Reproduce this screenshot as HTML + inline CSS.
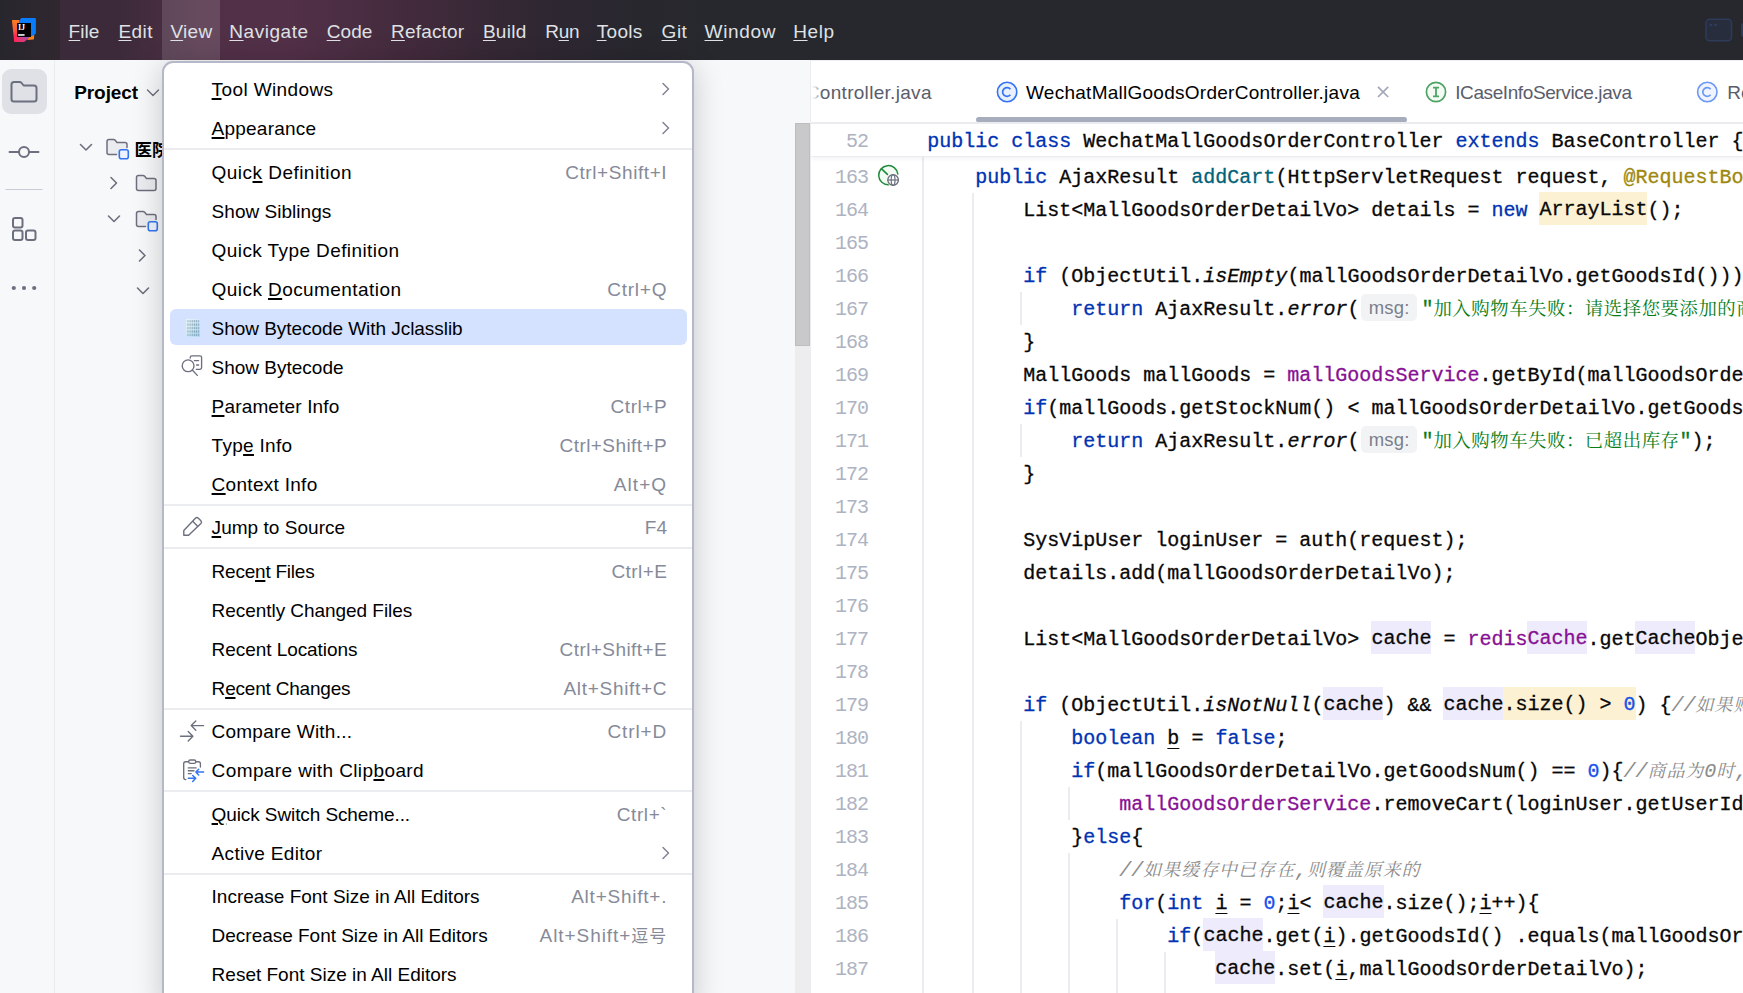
<!DOCTYPE html><html><head><meta charset="utf-8"><title>IDE</title><style>
*{box-sizing:border-box}
html,body{margin:0;padding:0}
body{width:1743px;height:993px;overflow:hidden;position:relative;background:#f7f8fa;font-family:"Liberation Sans","Noto Sans CJK SC",sans-serif;font-size:19px;color:#000}
u{text-decoration:underline;text-decoration-thickness:1.6px;text-underline-offset:1.5px}
#tb{position:absolute;left:0;top:0;width:1743px;height:60px;background:linear-gradient(90deg,#3a2a39 0px,#3c2a3a 120px,#513047 200px,#523048 290px,#412a3b 420px,#2f2732 540px,#28272e 640px,#27282e 720px,#27282e 100%)}
#tbdark{position:absolute;left:0;top:0;width:60px;height:60px;background:linear-gradient(90deg,#28262d,#30272f)}
#viewhl{position:absolute;left:162px;top:0;width:58px;height:60px;background:rgba(255,255,255,.13)}
.mb{position:absolute;top:1px;height:60px;line-height:62px;color:#dfe1e5;white-space:pre;font-size:19px}
.mb u{text-underline-offset:1.5px;text-decoration-thickness:1px}
#stripe{position:absolute;left:0;top:60px;width:55px;height:933px;background:#f7f8fa;border-right:1px solid #ebecf0}
#proj{position:absolute;left:55px;top:60px;width:756px;height:933px;background:#f7f8fa}
#ed{position:absolute;left:810px;top:60px;width:933px;height:933px;background:#fff;border-left:1px solid #ebecf0;overflow:hidden}
#menu{position:absolute;left:162px;top:61px;width:532px;height:950px;background:#fff;border:2px solid #b4b8c8;border-radius:11px;box-shadow:0 4px 30px rgba(0,0,0,.2)}
.mi{position:absolute;left:6px;width:517px;height:36px;border-radius:6px;white-space:pre}
.mi.sel{background:#d4e2ff}
.ml{position:absolute;left:41.6px;top:1px;line-height:37px;font-size:19px;color:#000}
.sc{position:absolute;top:1px;line-height:37px;font-size:19px;color:#868a98}
.arr{position:absolute;left:491px;top:11px}
.mic{position:absolute}
.sep{position:absolute;left:0;width:528px;height:2px;background:#ebecf0}
.tab{position:absolute;top:0;height:62px;line-height:66px;white-space:pre;color:#000;font-size:19px}
.tab.t1,.tab.t3,.tab.t4{color:#5a5d6b}
.ln{position:absolute;left:116.3px;height:33px;line-height:33px;white-space:pre;font-family:"Liberation Mono","Noto Serif CJK SC",monospace;font-size:20px;color:#080808;-webkit-text-stroke:0.3px}
.no{position:absolute;left:0;width:57px;text-align:right;height:33px;line-height:33px;font-family:"Liberation Mono",monospace;font-size:20px;color:#aeb3c2;letter-spacing:-1px}
.k{color:#0033b3}.f{color:#871094}.m{color:#00627a}.a{color:#9e880d}.s{color:#067d17}.n{color:#1750eb}.c{color:#8c8c8c;font-style:italic}.i{font-style:italic}
.cj{line-height:0;font-family:"Noto Serif CJK SC",serif;font-size:18.4px;letter-spacing:.54px;-webkit-text-stroke:0}
.c{-webkit-text-stroke:0.1px}.c .cj{font-size:18px;letter-spacing:.94px}
.hw{background:#fcf1d3;padding:6.2px 0 3.4px}.hi{background:#edebfc;padding:6.2px 0 3.4px}
.ul{text-decoration:underline;text-decoration-thickness:1px;text-underline-offset:4px}
.hint{display:inline-block;vertical-align:top;margin:1px 4.6px 0 2px;height:27px;line-height:27px;width:55.4px;-webkit-text-stroke:0;letter-spacing:.2px;text-align:center;border-radius:5px;background:#f2f3f5;color:#7a7e8a;font-family:"Liberation Sans",sans-serif;font-size:18.5px;font-style:normal}
.ig{position:absolute;width:2px;background:#ebecf0}

.scj{font-size:17px}

</style></head><body>
<div id="tb"><div id="tbdark"></div><div id="viewhl"></div>
<svg style="position:absolute;left:4px;top:10px" width="40" height="40" viewBox="4 10 40 40">
<defs><linearGradient id="lg1" x1="0" y1="0" x2="0.35" y2="1"><stop offset="0" stop-color="#fc801d"/><stop offset=".45" stop-color="#fd5a3a"/><stop offset=".7" stop-color="#fe2857"/><stop offset="1" stop-color="#fe2857"/></linearGradient>
<linearGradient id="lg2" x1="0" y1="1" x2="1" y2="0.3"><stop offset="0" stop-color="#fe2857"/><stop offset=".55" stop-color="#c8428e"/><stop offset="1" stop-color="#4a6bea"/></linearGradient></defs>
<path d="M12.6 20.1 L19.4 20.1 L21 30 L30 36.5 L23.9 41.9 L14.9 41.9 Q14.2 41.9 14.1 41.2 L12 20.8 Q12 20.1 12.6 20.1 Z" fill="url(#lg1)"/>
<path d="M18 37 L31.5 35.5 L27 39.6 L23.9 41.9 L16 41.9 Z" fill="url(#lg2)" opacity=".9"/>
<path d="M27 39.9 L33.4 39.4 Q34 39.3 34 38.7 L34.2 34.6 L29.5 36.8 Z" fill="#fc801d"/>
<path d="M21.6 18.1 L34.9 18.1 Q35.9 18.1 35.9 19.1 L35.9 33 Q35.9 33.6 35.4 33.9 L30 37 L19.2 26 L19.3 22 Q19.3 21 20 20 Q20.7 18.1 21.6 18.1 Z" fill="#087cfa"/>
<rect x="17" y="23" width="14" height="14" fill="#000"/>
<text x="17.9" y="30" font-family="Liberation Serif, serif" font-weight="bold" font-size="8.6" fill="#fff" textLength="7.2" lengthAdjust="spacingAndGlyphs">IJ</text>
<rect x="18.1" y="34.1" width="6.5" height="1.7" fill="#e8e8e8"/>
</svg>

<span class="mb" style="left:68.6px;letter-spacing:0.04px"><u>F</u>ile</span>
<span class="mb" style="left:118.5px;letter-spacing:0.39px"><u>E</u>dit</span>
<span class="mb" style="left:170.4px;letter-spacing:0.34px"><u>V</u>iew</span>
<span class="mb" style="left:229.3px;letter-spacing:0.54px"><u>N</u>avigate</span>
<span class="mb" style="left:326.7px;letter-spacing:0.09px"><u>C</u>ode</span>
<span class="mb" style="left:391.0px;letter-spacing:0.19px"><u>R</u>efactor</span>
<span class="mb" style="left:482.9px;letter-spacing:0.29px"><u>B</u>uild</span>
<span class="mb" style="left:545.3px;letter-spacing:-0.35px">R<u>u</u>n</span>
<span class="mb" style="left:596.7px;letter-spacing:0.31px"><u>T</u>ools</span>
<span class="mb" style="left:661.6px;letter-spacing:0.51px"><u>G</u>it</span>
<span class="mb" style="left:704.5px;letter-spacing:0.70px"><u>W</u>indow</span>
<span class="mb" style="left:793.3px;letter-spacing:0.56px"><u>H</u>elp</span>
<svg style="position:absolute;left:1704px;top:17px" width="39" height="26" viewBox="0 0 39 26">
<rect x="2" y="2.2" width="25.5" height="21.6" rx="3.5" fill="#272d3c" stroke="#2d3a58" stroke-width="1.6"/>
<rect x="5.6" y="7.2" width="2.6" height="1.4" fill="#34446a"/><rect x="10.2" y="7.2" width="2.6" height="1.4" fill="#34446a"/>
<rect x="37" y="6.5" width="6" height="13" rx="1" fill="#2d3a58"/>
</svg>

</div>
<div id="stripe">
<div style="position:absolute;left:2px;top:9px;width:45px;height:45px;border-radius:9px;background:#dfe1e6"></div>
<svg style="position:absolute;left:0;top:0" width="54" height="260" viewBox="0 0 54 260" fill="none" stroke="#6c707e" stroke-width="2" stroke-linejoin="round" stroke-linecap="round">
<path d="M11.5 24.5 Q11.5 22 14 22 L19.5 22 Q20.8 22 21.6 23 L23.6 25.5 L34 25.5 Q36.5 25.5 36.5 28 L36.5 39 Q36.5 41.5 34 41.5 L14 41.5 Q11.5 41.5 11.5 39 Z"/>
<path d="M9.5 92 L18.5 92 M29.5 92 L38.5 92"/><circle cx="24" cy="92" r="5"/>
<path d="M6 129.5 L42 129.5" stroke="#c9ccd6" stroke-width="1.2"/>
<rect x="13" y="158" width="9.5" height="9.5" rx="2"/><rect x="13" y="170.5" width="9.5" height="9.5" rx="2"/><rect x="26" y="170.5" width="9.5" height="9.5" rx="2"/>
<circle cx="13.8" cy="228" r="2.1" fill="#6c707e" stroke="none"/><circle cx="24" cy="228" r="2.1" fill="#6c707e" stroke="none"/><circle cx="34.2" cy="228" r="2.1" fill="#6c707e" stroke="none"/>
</svg>
</div>
<div id="proj">
<span style="position:absolute;left:19.2px;top:13px;line-height:40px;font-weight:bold;font-size:19px;letter-spacing:-0.07px">Project</span>
<svg style="position:absolute;left:0;top:0" width="120" height="260" viewBox="55 60 120 260" fill="none" stroke="#6c707e" stroke-width="1.6" stroke-linejoin="round" stroke-linecap="round">
<path d="M147.5 90 L153 95.5 L158.5 90" stroke-width="1.4"/>
<path d="M80.5 144.5 L86 150 L91.5 144.5"/>
<path d="M111 177.5 L116.5 183 L111 188.5"/>
<path d="M108.5 216 L114 221.5 L119.5 216"/>
<path d="M139.5 250 L145 255.5 L139.5 261"/>
<path d="M137.5 288 L143 293.5 L148.5 288"/>
<!-- folder row1 -->
<path d="M107 141.5 Q107 139.5 109 139.5 L113.5 139.5 Q114.5 139.5 115.2 140.3 L117 142.5 L125 142.5 Q127 142.5 127 144.5 L127 152.5 Q127 154.5 125 154.5 L109 154.5 Q107 154.5 107 152.5 Z" fill="#ebecf0" stroke="none"/>
<path d="M116.5 154.5 L109 154.5 Q107 154.5 107 152.5 L107 141.5 Q107 139.5 109 139.5 L113.5 139.5 Q114.5 139.5 115.2 140.3 L117 142.5 L125 142.5 Q127 142.5 127 144.5 L127 147.5" stroke-width="1.5"/>
<rect x="119.3" y="149.8" width="9" height="9" rx="2" fill="#edf3ff" stroke="#3574f0" stroke-width="1.6"/>
<!-- folder row2 -->
<path d="M136.5 177.5 Q136.5 175.5 138.5 175.5 L143 175.5 Q144 175.5 144.7 176.3 L146.5 178.5 L154 178.5 Q156 178.5 156 180.5 L156 188.5 Q156 190.5 154 190.5 L138.5 190.5 Q136.5 190.5 136.5 188.5 Z" fill="#ebecf0" stroke-width="1.5"/>
<!-- folder row3 -->
<path d="M136.5 213.5 Q136.5 211.5 138.5 211.5 L143 211.5 Q144 211.5 144.7 212.3 L146.5 214.5 L154 214.5 Q156 214.5 156 216.5 L156 224.5 Q156 226.5 154 226.5 L138.5 226.5 Q136.5 226.5 136.5 224.5 Z" fill="#ebecf0" stroke="none"/>
<path d="M145.5 226.5 L138.5 226.5 Q136.5 226.5 136.5 224.5 L136.5 213.5 Q136.5 211.5 138.5 211.5 L143 211.5 Q144 211.5 144.7 212.3 L146.5 214.5 L154 214.5 Q156 214.5 156 216.5 L156 219.5" stroke-width="1.5"/>
<rect x="148.3" y="221.8" width="9" height="9" rx="2" fill="#edf3ff" stroke="#3574f0" stroke-width="1.6"/>
</svg>
<span style="position:absolute;left:79.4px;top:72px;line-height:36px;font-weight:bold;font-size:17.5px;font-family:'Liberation Sans','Noto Sans CJK SC',sans-serif">医院</span>
<div style="position:absolute;left:740px;top:63px;width:15px;height:870px;background:#ededee"></div><div style="position:absolute;left:740px;top:63px;width:15px;height:223px;background:#c9c9c9;border:1px solid #bdbdbd"></div>
</div>

<div id="ed">
<!-- tab bar: page y 60..122 ; editor-relative coords = page - (811,60) -->
<div style="position:absolute;left:0;top:0;width:933px;height:64px;background:#fff;border-top:1px solid #eeeff2;border-bottom:2px solid #ebecf0"></div>
<div id="tabs" style="position:absolute;left:-811px;top:0;width:1743px;height:62px"><span class="tab t1" style="left:805.8px;letter-spacing:0.30px">Controller.java</span><span class="tab t2" style="left:1026.0px;letter-spacing:0.26px">WechatMallGoodsOrderController.java</span><span class="tab t3" style="left:1455.2px;letter-spacing:-0.40px">ICaseInfoService.java</span>
<span class="tab t4" style="left:1727.2px">Re</span>
<svg style="position:absolute;left:0;top:0" width="1743" height="62" viewBox="0 0 1743 62" fill="none">
<circle cx="1007.1" cy="32" r="9.7" fill="#e9f0fe" stroke="#3574f0" stroke-width="1.6"/>
<path d="M1010.4 29.2 A4.4 4.4 0 1 0 1010.4 34.8" stroke="#3574f0" stroke-width="1.7"/>
<circle cx="1436" cy="32" r="9.6" fill="#f4fbf5" stroke="#4fa364" stroke-width="1.7"/>
<path d="M1433 27.6 L1439 27.6 M1436 27.6 L1436 36.4 M1433 36.4 L1439 36.4" stroke="#4fa364" stroke-width="1.8"/>
<circle cx="1707.3" cy="32" r="9.7" fill="#eff4fe" stroke="#6b98f4" stroke-width="1.6"/>
<path d="M1710.6 29.2 A4.4 4.4 0 1 0 1710.6 34.8" stroke="#6b98f4" stroke-width="1.7"/>
<path d="M1378 26.8 L1388.2 37 M1388.2 26.8 L1378 37" stroke="#a3a7b8" stroke-width="1.7"/>
<rect x="976" y="57" width="431" height="5.5" rx="2.7" fill="#a8adbd"/>
</svg>
</div>
<div id="fadeL" style="position:absolute;left:0;top:10px;width:12px;height:44px;background:linear-gradient(90deg,#fff 0,rgba(255,255,255,.85) 4px,rgba(255,255,255,0) 11px)"></div>

<div class="no" style="top:100.5px">163</div><div class="ln" style="top:100.5px">    <span class="k">public</span> AjaxResult <span class="m">addCart</span>(HttpServletRequest request, <span class="a">@RequestBo</span></div>
<div class="no" style="top:133.5px">164</div><div class="ln" style="top:133.5px">        List&lt;MallGoodsOrderDetailVo&gt; details = <span class="k">new</span> <span class="hw">ArrayList</span>();</div>
<div class="no" style="top:166.5px">165</div><div class="ln" style="top:166.5px"></div>
<div class="no" style="top:199.5px">166</div><div class="ln" style="top:199.5px">        <span class="k">if</span> (ObjectUtil.<span class="i">isEmpty</span>(mallGoodsOrderDetailVo.getGoodsId()))</div>
<div class="no" style="top:232.5px">167</div><div class="ln" style="top:232.5px">            <span class="k">return</span> AjaxResult.<span class="i">error</span>(<span class="hint">msg:</span><span class="s">"<span class="cj">加入购物车失败：请选择您要添加的商</span></span></div>
<div class="no" style="top:265.5px">168</div><div class="ln" style="top:265.5px">        }</div>
<div class="no" style="top:298.5px">169</div><div class="ln" style="top:298.5px">        MallGoods mallGoods = <span class="f">mallGoodsService</span>.getById(mallGoodsOrde</div>
<div class="no" style="top:331.5px">170</div><div class="ln" style="top:331.5px">        <span class="k">if</span>(mallGoods.getStockNum() &lt; mallGoodsOrderDetailVo.getGoods</div>
<div class="no" style="top:364.5px">171</div><div class="ln" style="top:364.5px">            <span class="k">return</span> AjaxResult.<span class="i">error</span>(<span class="hint">msg:</span><span class="s">"<span class="cj">加入购物车失败：已超出库存</span>"</span>);</div>
<div class="no" style="top:397.5px">172</div><div class="ln" style="top:397.5px">        }</div>
<div class="no" style="top:430.5px">173</div><div class="ln" style="top:430.5px"></div>
<div class="no" style="top:463.5px">174</div><div class="ln" style="top:463.5px">        SysVipUser loginUser = auth(request);</div>
<div class="no" style="top:496.5px">175</div><div class="ln" style="top:496.5px">        details.add(mallGoodsOrderDetailVo);</div>
<div class="no" style="top:529.5px">176</div><div class="ln" style="top:529.5px"></div>
<div class="no" style="top:562.5px">177</div><div class="ln" style="top:562.5px">        List&lt;MallGoodsOrderDetailVo&gt; <span class="hi">cache</span> = <span class="f">redis<span class="hi">Cache</span></span>.get<span class="hi">Cache</span>Obje</div>
<div class="no" style="top:595.5px">178</div><div class="ln" style="top:595.5px"></div>
<div class="no" style="top:628.5px">179</div><div class="ln" style="top:628.5px">        <span class="k">if</span> (ObjectUtil.<span class="i">isNotNull</span>(<span class="hi">cache</span>) &amp;&amp; <span class="hi">cache</span><span class="hw">.size() &gt; <span class="n">0</span></span>) {<span class="c">//<span class="cj">如果购</span></span></div>
<div class="no" style="top:661.5px">180</div><div class="ln" style="top:661.5px">            <span class="k">boolean</span> <span class="ul">b</span> = <span class="k">false</span>;</div>
<div class="no" style="top:694.5px">181</div><div class="ln" style="top:694.5px">            <span class="k">if</span>(mallGoodsOrderDetailVo.getGoodsNum() == <span class="n">0</span>){<span class="c">//<span class="cj">商品为</span>0<span class="cj">时</span>,</span></div>
<div class="no" style="top:727.5px">182</div><div class="ln" style="top:727.5px">                <span class="f">mallGoodsOrderService</span>.removeCart(loginUser.getUserId</div>
<div class="no" style="top:760.5px">183</div><div class="ln" style="top:760.5px">            }<span class="k">else</span>{</div>
<div class="no" style="top:793.5px">184</div><div class="ln" style="top:793.5px">                <span class="c">//<span class="cj">如果缓存中已存在</span>,<span class="cj">则覆盖原来的</span></span></div>
<div class="no" style="top:826.5px">185</div><div class="ln" style="top:826.5px">                <span class="k">for</span>(<span class="k">int</span> <span class="ul">i</span> = <span class="n">0</span>;<span class="ul">i</span>&lt; <span class="hi">cache</span>.size();<span class="ul">i</span>++){</div>
<div class="no" style="top:859.5px">186</div><div class="ln" style="top:859.5px">                    <span class="k">if</span>(<span class="hi">cache</span>.get(<span class="ul">i</span>).getGoodsId() .equals(mallGoodsOr</div>
<div class="no" style="top:892.5px">187</div><div class="ln" style="top:892.5px">                        <span class="hi">cache</span>.set(<span class="ul">i</span>,mallGoodsOrderDetailVo);</div>
<div class="ig" style="left:111px;top:97px;height:840px"></div>
<div class="ig" style="left:161px;top:132.5px;height:800.5px"></div>
<div class="ig" style="left:209px;top:231.5px;height:33.0px"></div>
<div class="ig" style="left:209px;top:363.5px;height:33.0px"></div>
<div class="ig" style="left:209px;top:660.5px;height:272.5px"></div>
<div class="ig" style="left:257px;top:726.5px;height:33.0px"></div>
<div class="ig" style="left:257px;top:792.5px;height:140.5px"></div>
<div class="ig" style="left:305px;top:858.5px;height:74.5px"></div>
<div class="ig" style="left:353px;top:891.5px;height:41.5px"></div>
<svg style="position:absolute;left:65px;top:103px" width="28" height="28" viewBox="876 163 28 28" fill="none">
<circle cx="888.3" cy="175.2" r="9" fill="#f2fcf3"/>
<path d="M888.6 184.8 A9.6 9.6 0 1 1 897.8 174" stroke="#208a3c" stroke-width="1.5" stroke-linecap="round"/><path d="M881.6 168.9 L887.4 174.4" stroke="#208a3c" stroke-width="1.6" stroke-linecap="round"/>
<circle cx="893.1" cy="180" r="6.3" fill="#fff"/>
<circle cx="893.1" cy="180" r="5.3" fill="#fff" stroke="#6c707e" stroke-width="1.4"/><path d="M887.8 180 L898.4 180" stroke="#6c707e" stroke-width="1.2"/><ellipse cx="893.1" cy="180" rx="1.9" ry="5.3" stroke="#6c707e" stroke-width="1.2"/>
</svg>
<div style="position:absolute;left:0;top:64px;width:933px;height:33px;background:#fff;border-bottom:1px solid #ebecf0;box-shadow:0 2px 4px rgba(0,0,0,.05)"><div class="no" style="top:0.5px">52</div><div class="ln" style="top:0.5px"><span class="k">public</span> <span class="k">class</span> WechatMallGoodsOrderController <span class="k">extends</span> BaseController {</div></div>
</div>
<div id="menu">
<div class="mi" style="top:7px">
<span class="ml" style="letter-spacing:0.39px"><u>T</u>ool Windows</span>
<svg class="arr" width="10" height="16" viewBox="0 0 10 16"><path d="M2 2.5 L7.5 8 L2 13.5" fill="none" stroke="#818594" stroke-width="1.5" stroke-linecap="round" stroke-linejoin="round"/></svg>
</div>
<div class="mi" style="top:46px">
<span class="ml" style="letter-spacing:0.22px"><u>A</u>ppearance</span>
<svg class="arr" width="10" height="16" viewBox="0 0 10 16"><path d="M2 2.5 L7.5 8 L2 13.5" fill="none" stroke="#818594" stroke-width="1.5" stroke-linecap="round" stroke-linejoin="round"/></svg>
</div>
<div class="sep" style="top:85px"></div>
<div class="mi" style="top:90px">
<span class="ml" style="letter-spacing:0.46px">Quic<u>k</u> Definition</span>
<span class="sc" style="letter-spacing:0.58px;left:395.2px">Ctrl+Shift+I</span>
</div>
<div class="mi" style="top:129px">
<span class="ml" style="letter-spacing:0.03px">Show Siblings</span>
</div>
<div class="mi" style="top:168px">
<span class="ml" style="letter-spacing:0.41px">Quick Type Definition</span>
</div>
<div class="mi" style="top:207px">
<span class="ml" style="letter-spacing:0.43px">Quick <u>D</u>ocumentation</span>
<span class="sc" style="letter-spacing:0.76px;left:437.2px">Ctrl+Q</span>
</div>
<div class="mi sel" style="top:246px">
<svg class="mic" style="left:0;top:1px" width="60" height="36" viewBox="170 310 60 36">
<defs><linearGradient id="jg" x1="0" y1="0" x2="1" y2="1"><stop offset="0" stop-color="#eaf5f9"/><stop offset=".45" stop-color="#d3ebf5"/><stop offset="1" stop-color="#a6d9f2"/></linearGradient>
<pattern id="jp" x="186.9" y="319.8" width="2.15" height="3.45" patternUnits="userSpaceOnUse"><rect x="0.45" y="0.3" width="1.15" height="2.1" fill="#55788f" opacity=".62"/></pattern></defs>
<rect x="186.1" y="318.9" width="13.8" height="17.9" fill="url(#jg)"/>
<rect x="186.9" y="319.8" width="12.6" height="16.6" fill="url(#jp)"/>
</svg>

<span class="ml" style="letter-spacing:-0.05px">Show Bytecode With Jclasslib</span>
</div>
<div class="mi" style="top:285px">
<svg class="mic" style="left:0;top:1px" width="60" height="36" viewBox="170 349 60 36" fill="none" stroke="#6c707e" stroke-width="1.35" stroke-linecap="round" stroke-linejoin="round">
<path d="M190.2 358 L190.2 357.6 Q190.2 355.9 191.9 355.9 L199.9 355.9 Q201.6 355.9 201.6 357.6 L201.6 367.6 Q201.6 369.3 199.9 369.3 L196.3 369.3"/>
<path d="M194.4 360.6 L198.6 360.6 M196.6 365 L198.6 365"/>
<circle cx="188.1" cy="365.8" r="5.9"/><path d="M192.5 370.2 L197.3 375.4"/>
</svg>

<span class="ml" style="letter-spacing:-0.01px">Show Bytecode</span>
</div>
<div class="mi" style="top:324px">
<span class="ml" style="letter-spacing:0.16px"><u>P</u>arameter Info</span>
<span class="sc" style="letter-spacing:0.55px;left:440.6px">Ctrl+P</span>
</div>
<div class="mi" style="top:363px">
<span class="ml" style="letter-spacing:0.29px">Typ<u>e</u> Info</span>
<span class="sc" style="letter-spacing:0.44px;left:389.5px">Ctrl+Shift+P</span>
</div>
<div class="mi" style="top:402px">
<span class="ml" style="letter-spacing:0.29px"><u>C</u>ontext Info</span>
<span class="sc" style="letter-spacing:1.09px;left:443.7px">Alt+Q</span>
</div>
<div class="sep" style="top:441px"></div>
<div class="mi" style="top:445px">
<svg class="mic" style="left:0;top:1px" width="60" height="36" viewBox="170 509 60 36" fill="none" stroke="#6c707e" stroke-width="1.4" stroke-linecap="round" stroke-linejoin="round">
<path d="M183.8 535.3 L183.8 530.6 L195.4 518.3 Q196.9 516.9 198.4 518.3 L200.9 520.8 Q202.2 522.2 200.9 523.6 L188.6 535.3 Z"/>
<path d="M193 521.6 L197.6 526.2"/>
</svg>

<span class="ml" style="letter-spacing:0.04px"><u>J</u>ump to Source</span>
<span class="sc" style="letter-spacing:0.16px;left:474.7px">F4</span>
</div>
<div class="sep" style="top:484px"></div>
<div class="mi" style="top:489px">
<span class="ml" style="letter-spacing:-0.23px">Rece<u>n</u>t Files</span>
<span class="sc" style="letter-spacing:0.40px;left:441.5px">Ctrl+E</span>
</div>
<div class="mi" style="top:528px">
<span class="ml" style="letter-spacing:-0.05px">Recently Changed Files</span>
</div>
<div class="mi" style="top:567px">
<span class="ml" style="letter-spacing:-0.06px">Recent Locations</span>
<span class="sc" style="letter-spacing:0.44px;left:389.5px">Ctrl+Shift+E</span>
</div>
<div class="mi" style="top:606px">
<span class="ml" style="letter-spacing:-0.20px">R<u>e</u>cent Changes</span>
<span class="sc" style="letter-spacing:0.69px;left:393.5px">Alt+Shift+C</span>
</div>
<div class="sep" style="top:645px"></div>
<div class="mi" style="top:649px">
<svg class="mic" style="left:0;top:1px" width="60" height="36" viewBox="170 713 60 36" fill="none" stroke="#6c707e" stroke-width="1.4" stroke-linecap="round" stroke-linejoin="round">
<path d="M203.6 725.6 L191.3 725.6 M195.8 721 L191.2 725.6 L195.8 730.2"/>
<path d="M180.5 736.2 L192.9 736.2 M188.2 731.6 L192.9 736.2 L188.2 740.9"/>
</svg>

<span class="ml" style="letter-spacing:0.22px">Compare With...</span>
<span class="sc" style="letter-spacing:0.89px;left:437.5px">Ctrl+D</span>
</div>
<div class="mi" style="top:688px">
<svg class="mic" style="left:0;top:1px" width="60" height="36" viewBox="170 752 60 36" fill="none" stroke="#6c707e" stroke-width="1.35" stroke-linecap="round" stroke-linejoin="round">
<path d="M185.8 779.6 L185.6 779.6 Q183.7 779.6 183.7 777.6 L183.7 763.7 Q183.7 761.7 185.7 761.7 L198.4 761.7 Q200.4 761.7 200.4 763.7 L200.4 767"/>
<rect x="188.7" y="760" width="7.1" height="3.3" rx="1.6" fill="#fff"/>
<path d="M188.3 767.9 L196.1 767.9 M188.3 770.7 L194 770.7 M188.3 773.6 L191.2 773.6"/>
<path d="M203.6 772 L196 772 M198.7 769.2 L195.9 772 L198.7 775" stroke="#3574f0" stroke-width="1.5"/>
<path d="M188.3 778.3 L195.6 778.3 M192.7 775.5 L195.7 778.3 L192.7 781.4" stroke="#3574f0" stroke-width="1.5"/>
</svg>

<span class="ml" style="letter-spacing:0.39px">Compare with Clip<u>b</u>oard</span>
</div>
<div class="sep" style="top:727px"></div>
<div class="mi" style="top:732px">
<span class="ml" style="letter-spacing:-0.10px"><u>Q</u>uick Switch Scheme...</span>
<span class="sc" style="letter-spacing:0.57px;left:446.8px">Ctrl+`</span>
</div>
<div class="mi" style="top:771px">
<span class="ml" style="letter-spacing:0.32px">Active Editor</span>
<svg class="arr" width="10" height="16" viewBox="0 0 10 16"><path d="M2 2.5 L7.5 8 L2 13.5" fill="none" stroke="#818594" stroke-width="1.5" stroke-linecap="round" stroke-linejoin="round"/></svg>
</div>
<div class="sep" style="top:810px"></div>
<div class="mi" style="top:814px">
<span class="ml" style="letter-spacing:-0.01px">Increase Font Size in All Editors</span>
<span class="sc" style="letter-spacing:0.76px;left:401.2px">Alt+Shift+.</span>
</div>
<div class="mi" style="top:853px">
<span class="ml" style="letter-spacing:-0.02px">Decrease Font Size in All Editors</span>
<span class="sc" style="letter-spacing:0.93px;left:369.6px">Alt+Shift+<span style="font-size:17px">逗号</span></span>
</div>
<div class="mi" style="top:892px">
<span class="ml" style="letter-spacing:-0.00px">Reset Font Size in All Editors</span>
</div>
</div>
</body></html>
